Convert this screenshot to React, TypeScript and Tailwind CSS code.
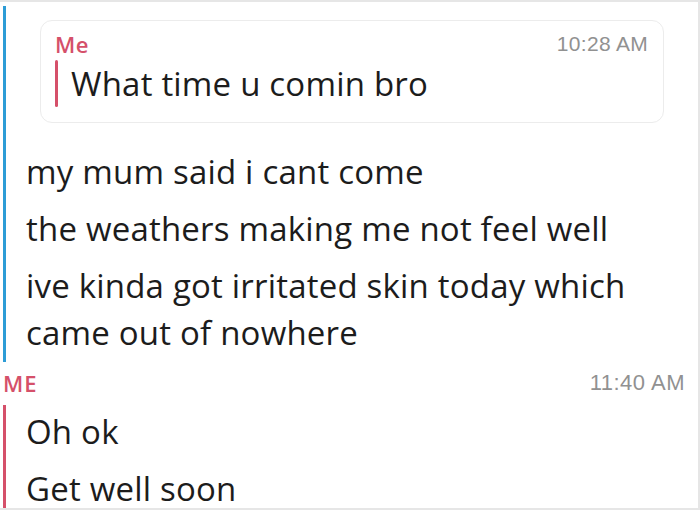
import React from "react";

const font = { fontFamily: "'Open Sans', Lato, sans-serif" };
const stamp = { fontFamily: "'Liberation Sans', Arial, sans-serif" };

export default function App() {
  const replies = [
    "my mum said i cant come",
    "the weathers making me not feel well",
    "ive kinda got irritated skin today which came out of nowhere",
  ];
  const mine = ["Oh ok", "Get well soon"];

  return (
    <div
      className="w-[700px] h-[510px] overflow-hidden bg-white border-t-2 border-r-2 border-b-2 border-[#e6e6e6] flex flex-col"
      style={font}
    >
      {/* Friend's block */}
      <div className="shrink-0 mt-[4px] ml-[3px] border-l-[3px] border-[#2d9cd6] h-[356px] flex flex-col">
        <div className="ml-[34px] mr-[34px] mt-[14px] h-[103px] rounded-xl border border-[#ececec] bg-white px-[14px] pt-[9px]">
          <div className="flex justify-between items-start">
            <span className="text-[22px] font-semibold text-[#d5506a] leading-[28px] tracking-[0.5px]">Me</span>
            <span className="text-[21px] text-[#919191] leading-[28px] mr-[1px] tracking-[0.3px]" style={stamp}>
              10:28 AM
            </span>
          </div>
          <div className="flex items-center mt-[2px]">
            <div className="w-[3px] h-[47px] bg-[#d5506a] rounded-sm" />
            <span className="ml-[13px] text-[33px] text-[#1c1c1c] leading-[44px] tracking-[0.2px]">
              What time u comin bro
            </span>
          </div>
        </div>
        <div className="pl-[20px] w-[670px] mt-[25px] flex flex-col gap-[10px]">
          {replies.map((m, i) => (
            <p key={i} className="text-[33px] text-[#1c1c1c] leading-[47px] tracking-[0.2px]">
              {m}
            </p>
          ))}
        </div>
      </div>

      {/* My block */}
      <div className="shrink-0 flex justify-between items-center ml-[3px] mr-[13px] mt-[8px]">
        <span className="text-[22px] font-semibold text-[#d5506a] leading-[26px] tracking-[1px]">ME</span>
        <span className="text-[22px] text-[#919191] leading-[26px] tracking-[0.5px]" style={stamp}>
          11:40 AM
        </span>
      </div>
      <div className="flex-1 ml-[3px] mt-[9px] border-l-[3px] border-[#d5506a] pl-[20px] pt-[9px] flex flex-col gap-[21px]">
        {mine.map((m, i) => (
          <p key={i} className="text-[33px] text-[#1c1c1c] leading-[36px] tracking-[0.2px]">
            {m}
          </p>
        ))}
      </div>
    </div>
  );
}
